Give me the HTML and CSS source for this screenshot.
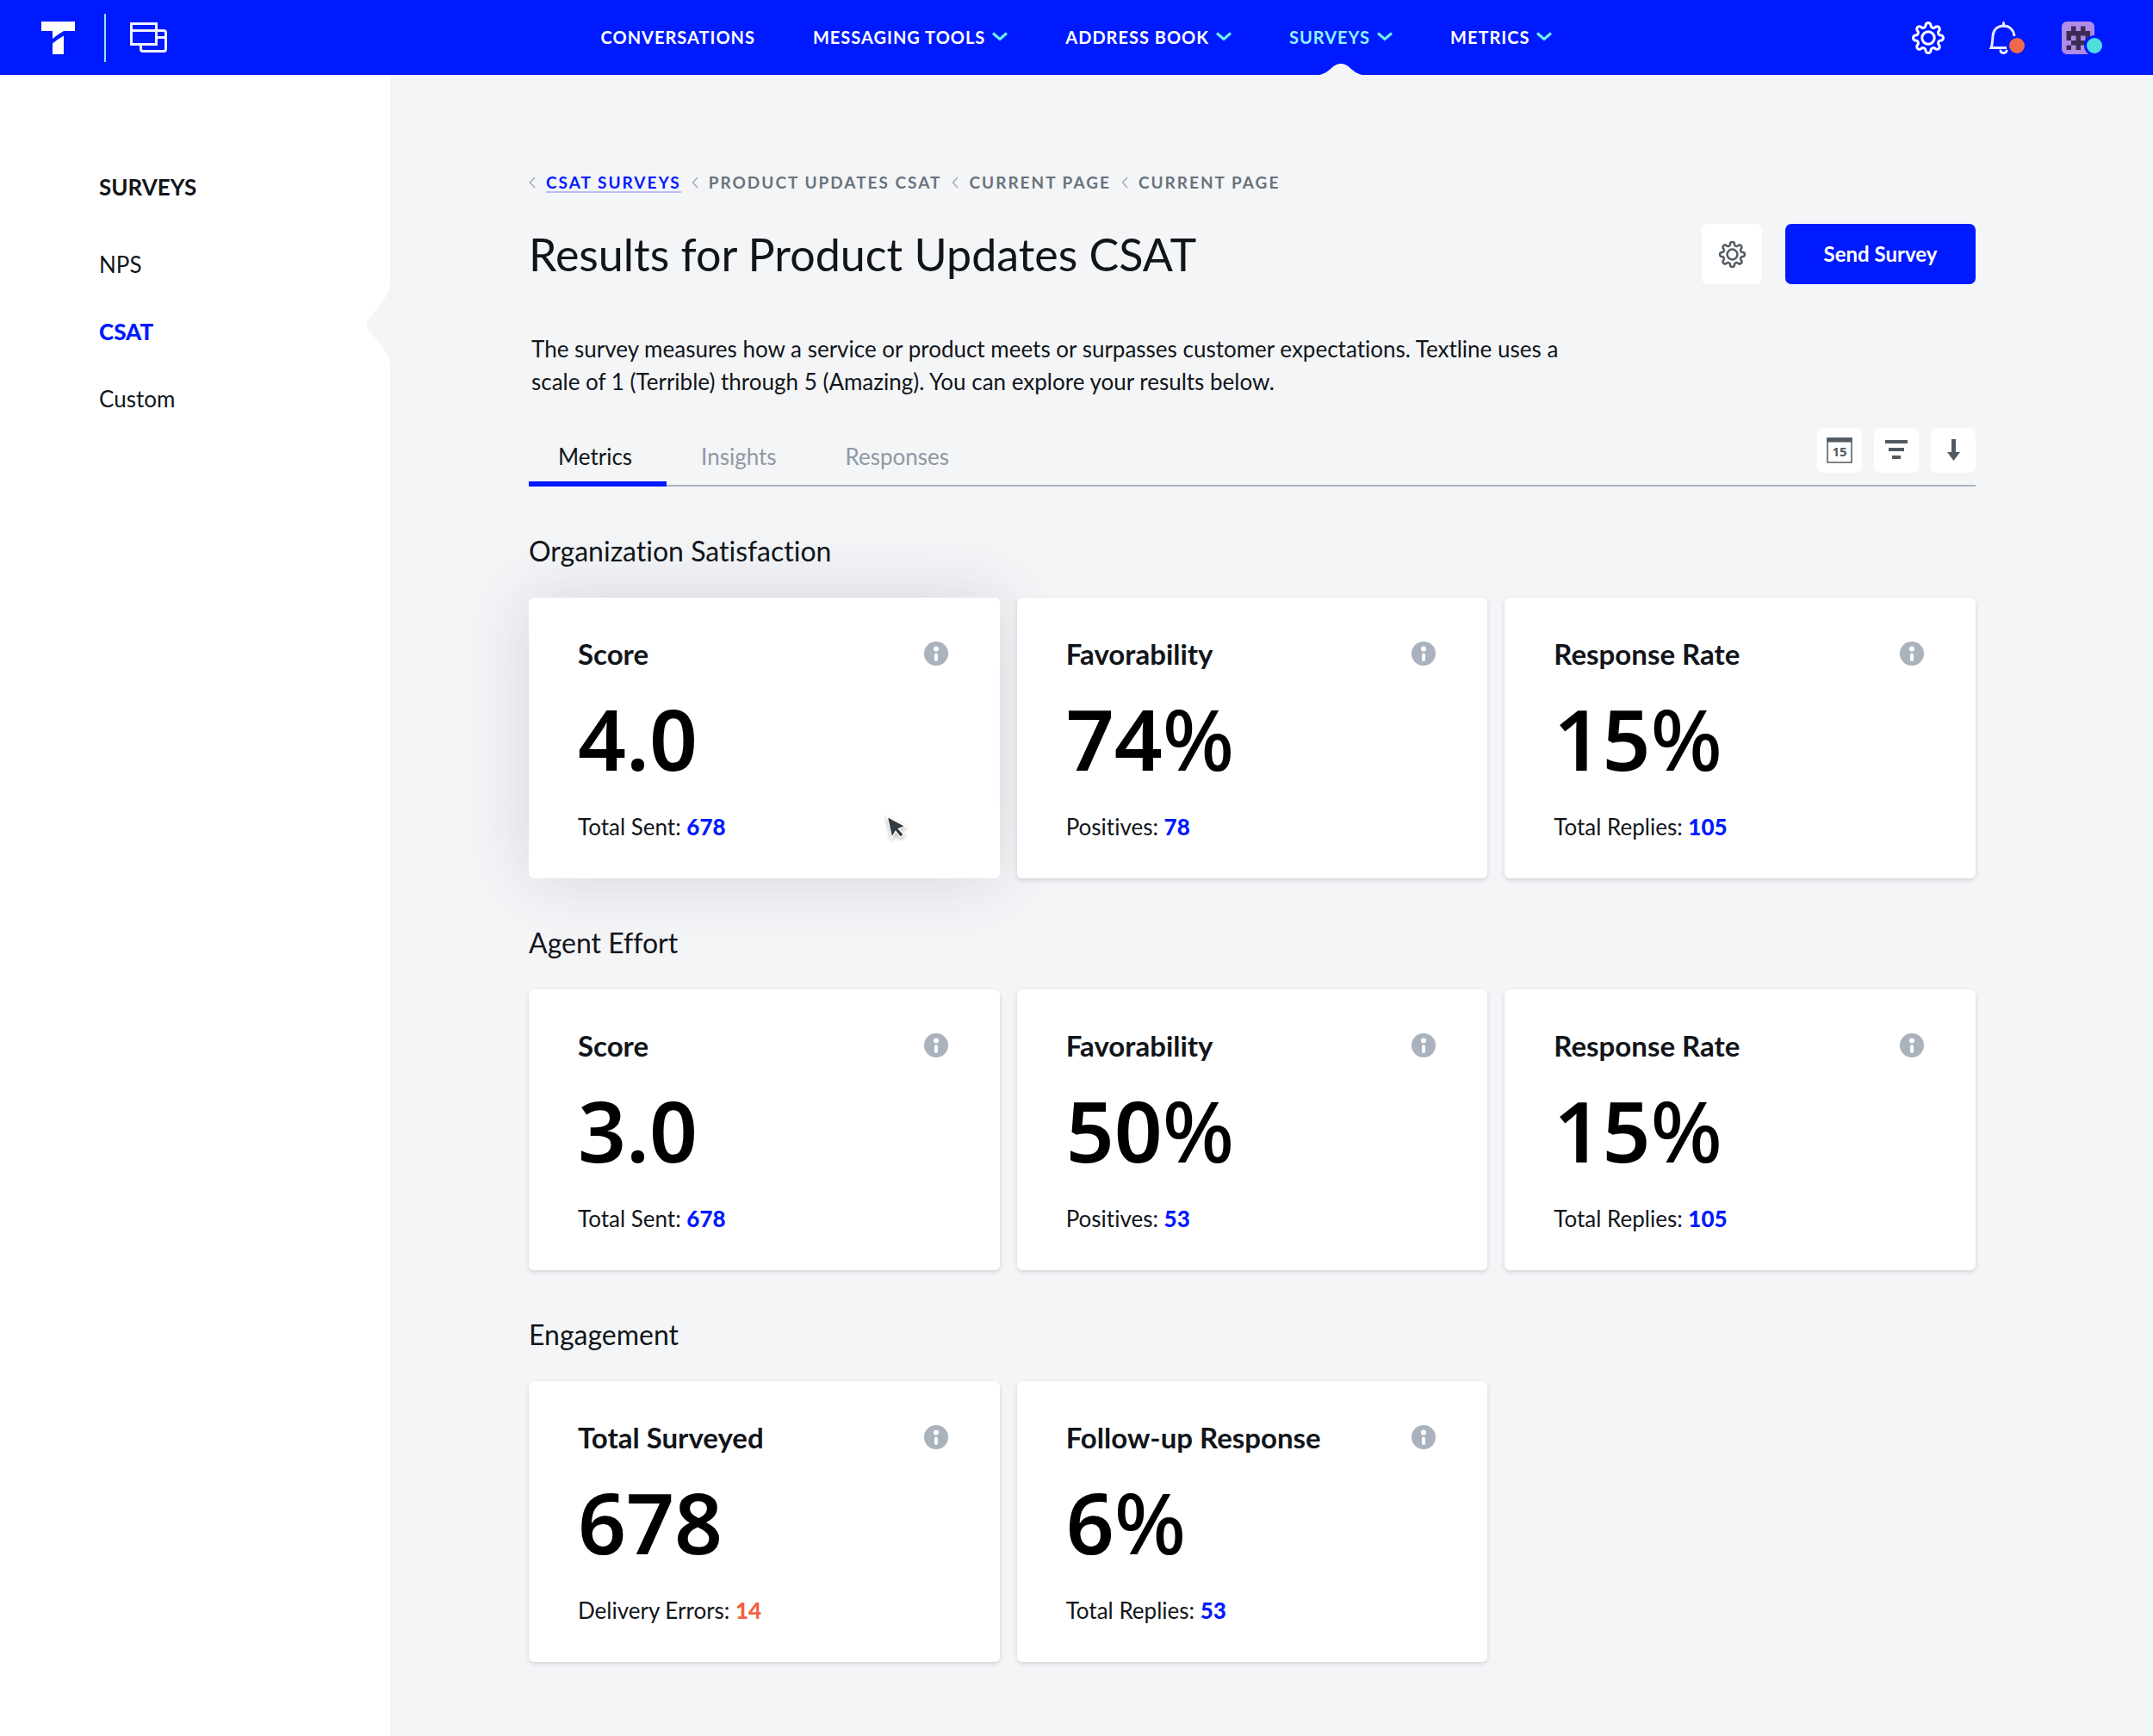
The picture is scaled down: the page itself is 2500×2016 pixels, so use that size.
FILE: index.html
```html
<!DOCTYPE html>
<html lang="en">
<head>
<meta charset="utf-8">
<meta name="viewport" content="width=device-width, initial-scale=1">
<title>Results for Product Updates CSAT</title>
<link rel="stylesheet" href="styles.css">
</head>
<body>
<svg class="sprite" aria-hidden="true">
  <symbol id="gear" viewBox="-20 -20 40 40">
    <path fill="none" stroke="currentColor" stroke-width="3" d="M-3-14.5A3 3 0 0 1 3-14.5A3 3 0 0 0 8.1-12.4A3 3 0 0 1 12.4-8.1A3 3 0 0 0 14.5-3A3 3 0 0 1 14.5 3A3 3 0 0 0 12.4 8.1A3 3 0 0 1 8.1 12.4A3 3 0 0 0 3 14.5A3 3 0 0 1-3 14.5A3 3 0 0 0-8.1 12.4A3 3 0 0 1-12.4 8.1A3 3 0 0 0-14.5 3A3 3 0 0 1-14.5-3A3 3 0 0 0-12.4-8.1A3 3 0 0 1-8.1-12.4A3 3 0 0 0-3-14.5Z"/>
    <circle r="7.2" fill="none" stroke="currentColor" stroke-width="3"/>
  </symbol>
  <symbol id="chevron" viewBox="0 0 18 11">
    <path fill="none" stroke="currentColor" stroke-width="3" d="M1 1.5L9 8.5L17 1.5"/>
  </symbol>
  <symbol id="back" viewBox="0 0 8 14">
    <path fill="none" stroke="currentColor" stroke-width="1.5" d="M7 1L1.5 7L7 13"/>
  </symbol>
  <symbol id="info" viewBox="0 0 28 28">
    <circle cx="14" cy="14" r="14" fill="#aab2bd"/>
    <circle cx="14" cy="8.5" r="3" fill="#fff"/>
    <rect x="12" y="13.5" width="4" height="9.5" rx="2" fill="#fff"/>
  </symbol>
</svg>

<header class="topbar">
  <div class="brand">
    <a href="#" class="icon-link" aria-label="Home">
      <svg width="39" height="38" viewBox="0 0 39 38"><path fill="#fff" d="M0 0H39V11H26Q19 15 13 20V11H0ZM26 16.500V38H13V25.500Q18 21 26 16.500Z"/></svg>
    </a>
    <span class="divider"></span>
    <a href="#" class="icon-link" aria-label="Windows">
      <svg width="43" height="36" viewBox="0 0 43 36" fill="none" stroke="#eef1ff" stroke-width="3"><path d="M1.500 1.500H30.500V25.500H1.500ZM1.500 9.500H39Q41.500 9.500 41.500 12V31Q41.500 33.500 39 33.500H15Q12.500 33.500 12.500 31V25.500M30.500 17.500H41.500"/></svg>
    </a>
  </div>
  <nav class="mainnav" aria-label="Main">
    <a href="#" class="nav-item">CONVERSATIONS</a>
    <button type="button" class="nav-item">MESSAGING TOOLS<svg class="chev"><use href="#chevron"/></svg></button>
    <button type="button" class="nav-item">ADDRESS BOOK<svg class="chev"><use href="#chevron"/></svg></button>
    <button type="button" class="nav-item active">SURVEYS<svg class="chev"><use href="#chevron"/></svg>
      <svg class="nav-notch" viewBox="0 0 50 13"><path fill="#f4f5f7" d="M0 13C12 11 15 0 25 0S38 11 50 13Z"/></svg></button>
    <button type="button" class="nav-item">METRICS<svg class="chev"><use href="#chevron"/></svg></button>
  </nav>
  <div class="tools">
    <button type="button" class="tool" aria-label="Settings"><svg class="gear-lg"><use href="#gear"/></svg></button>
    <button type="button" class="tool" aria-label="Notifications">
      <svg width="48" height="40" viewBox="-3 3 48 40"><g fill="none" stroke="#e6eaff" stroke-width="3" stroke-linecap="round"><path d="M20.500 5.500V9"/><path stroke-linecap="butt" d="M33 21C32 13 27 9 20.500 9C13 9 8.500 14 8 21C7.500 28 7.500 31 6 34.500H24"/><path d="M17 38Q17.500 40.500 20.500 40.500T24 38"/></g><circle cx="36" cy="32" r="9" fill="#ee6a4c"/></svg>
    </button>
    <button type="button" class="tool" aria-label="Account">
      <svg width="48" height="40" viewBox="0 0 48 40"><rect y="1" width="38" height="38" rx="6" fill="#b18be8"/>
        <g fill="#3b2c55" transform="translate(5.500 6.500) scale(5.500)"><path d="M1 0H2V1H3V0H4V1H5V4H4V5H4V4H3V5H2V4H1V3H0V1H1ZM1 2V3H2V2ZM3 2V3H4V2ZM0 4H1V5H0Z" fill-rule="evenodd"/></g>
        <circle cx="38" cy="29" r="12" fill="#001aff"/><circle cx="38" cy="29" r="9" fill="#4fdfdf"/></svg>
    </button>
  </div>
</header>

<div class="layout">
  <aside class="sidebar">
    <h2 class="side-title">SURVEYS</h2>
    <ul class="side-list">
      <li><a href="#">NPS</a></li>
      <li class="current"><a href="#" aria-current="page">CSAT</a>
        <svg class="side-notch" viewBox="0 0 27 90"><path fill="#f4f5f7" d="M27 0C27 8 14 25 4 36Q0 40 0 45T4 54C14 65 27 82 27 90Z"/></svg></li>
      <li><a href="#">Custom</a></li>
    </ul>
  </aside>

  <main class="main">
    <nav class="crumbs" aria-label="Breadcrumb">
      <svg class="back"><use href="#back"/></svg><a href="#">CSAT SURVEYS</a>
      <svg class="back"><use href="#back"/></svg><span>PRODUCT UPDATES CSAT</span>
      <svg class="back"><use href="#back"/></svg><span>CURRENT PAGE</span>
      <svg class="back"><use href="#back"/></svg><span>CURRENT PAGE</span>
    </nav>

    <div class="title-row">
      <h1>Results for Product Updates CSAT</h1>
      <button type="button" class="gear-btn" aria-label="Survey settings"><svg class="gear-sm"><use href="#gear"/></svg></button>
      <button type="button" class="send-btn">Send Survey</button>
    </div>

    <p class="intro">The survey measures how a service or product meets or surpasses customer expectations. Textline uses a scale of 1 (Terrible) through 5 (Amazing). You can explore your results below.</p>

    <div class="tabs-row">
      <div class="tabs" role="tablist">
        <button type="button" role="tab" class="tab selected" aria-selected="true">Metrics</button>
        <button type="button" role="tab" class="tab" aria-selected="false">Insights</button>
        <button type="button" role="tab" class="tab" aria-selected="false">Responses</button>
      </div>
      <div class="actions">
        <button type="button" class="action" aria-label="Date range"><svg width="30" height="30" viewBox="0 0 30 30"><rect x="1" y="1" width="28" height="28" fill="none" stroke="#525a61" stroke-width="1.500"/><rect x="0.500" y="0.500" width="29" height="5" fill="#525a61"/><text class="cal-day" x="15" y="22" text-anchor="middle">15</text></svg></button>
        <button type="button" class="action" aria-label="Filter"><svg width="26" height="24" viewBox="0 0 26 24" fill="#525a61"><rect width="26" height="4" y="0"/><rect x="4" y="9" width="18" height="4"/><rect x="8" y="18" width="10" height="4"/></svg></button>
        <button type="button" class="action" aria-label="Download"><svg width="15" height="26" viewBox="0 0 15 26" fill="#525a61"><path d="M5 0H10V15H15L7.500 25L0 15H5Z"/></svg></button>
      </div>
    </div>

    <section class="group">
      <h2>Organization Satisfaction</h2>
      <div class="cards">
        <article class="card raised">
          <header><h3>Score</h3><svg class="info"><use href="#info"/></svg></header>
          <p class="value">4.0</p>
          <p class="note">Total Sent: <a href="#">678</a></p>
          <svg class="cursor" viewBox="0 0 26 30"><path fill="#343c42" stroke="#fff" stroke-width="1.500" d="M2 2L23.500 13.500L15.500 16.500L21.500 23L17.500 26.500L12 19.500L7.500 27Z"/></svg>
        </article>
        <article class="card">
          <header><h3>Favorability</h3><svg class="info"><use href="#info"/></svg></header>
          <p class="value">74<span>%</span></p>
          <p class="note">Positives: <a href="#">78</a></p>
        </article>
        <article class="card">
          <header><h3>Response Rate</h3><svg class="info"><use href="#info"/></svg></header>
          <p class="value">15<span>%</span></p>
          <p class="note">Total Replies: <a href="#">105</a></p>
        </article>
      </div>
    </section>

    <section class="group">
      <h2>Agent Effort</h2>
      <div class="cards">
        <article class="card">
          <header><h3>Score</h3><svg class="info"><use href="#info"/></svg></header>
          <p class="value">3.0</p>
          <p class="note">Total Sent: <a href="#">678</a></p>
        </article>
        <article class="card">
          <header><h3>Favorability</h3><svg class="info"><use href="#info"/></svg></header>
          <p class="value">50<span>%</span></p>
          <p class="note">Positives: <a href="#">53</a></p>
        </article>
        <article class="card">
          <header><h3>Response Rate</h3><svg class="info"><use href="#info"/></svg></header>
          <p class="value">15<span>%</span></p>
          <p class="note">Total Replies: <a href="#">105</a></p>
        </article>
      </div>
    </section>

    <section class="group">
      <h2>Engagement</h2>
      <div class="cards">
        <article class="card">
          <header><h3>Total Surveyed</h3><svg class="info"><use href="#info"/></svg></header>
          <p class="value">678</p>
          <p class="note">Delivery Errors: <a href="#" class="error">14</a></p>
        </article>
        <article class="card">
          <header><h3>Follow-up Response</h3><svg class="info"><use href="#info"/></svg></header>
          <p class="value">6<span>%</span></p>
          <p class="note">Total Replies: <a href="#">53</a></p>
        </article>
      </div>
    </section>
  </main>
</div>
</body>
</html>
```
FILE: styles.css
```css
:root {
  --blue: #001aff;
  --ink: #11151a;
  --page: #f4f5f7;
  --slate: #525a61;
}

* { box-sizing: border-box; }

body {
  margin: 0;
  min-height: 100vh;
  display: flex;
  flex-direction: column;
  background: var(--page);
  color: var(--ink);
  font: 400 26px/32px Lato, "Noto Sans", sans-serif;
  font-variant-ligatures: none;
}

h1, h2, h3, p, ul { margin: 0; padding: 0; font-weight: 400; }
ul { list-style: none; }
a { color: inherit; text-decoration: none; }
button { margin: 0; padding: 0; border: 0; background: none; color: inherit; font: inherit; cursor: pointer; }
svg { display: block; flex: none; overflow: visible; }
.sprite { position: absolute; width: 0; height: 0; }

/* Top bar */
.topbar {
  display: grid;
  grid-template-columns: 1fr auto 1fr;
  height: 87px;
  background: var(--blue);
  color: #fff;
}
.brand { display: flex; align-items: center; padding-left: 48px; }
.divider { width: 2px; height: 56px; margin: 0 28px 0 34px; background: #7ff0ea; }
.mainnav { display: flex; gap: 67px; }
.nav-item {
  position: relative;
  display: flex;
  align-items: center;
  gap: 8px;
  padding-bottom: 2px;
  font-size: 20px;
  font-weight: 700;
  letter-spacing: 1px;
  white-space: nowrap;
}
.nav-item.active { color: #8df3ff; }
.chev { width: 18px; height: 11px; color: #6cf0ea; }
.nav-notch { position: absolute; bottom: 0; left: calc(50% - 25px); width: 50px; height: 13px; }
.tools { display: flex; align-items: center; justify-content: flex-end; gap: 43px; padding-right: 58px; }
.gear-lg { width: 42px; height: 40px; }

/* Body layout */
.layout { flex: 1; display: flex; }
.sidebar { flex: none; width: 453px; padding: 114px 0 60px 115px; background: #fff; }
.side-title { margin-bottom: 58px; font-size: 26px; font-weight: 700; }
.side-list { display: grid; gap: 46px; }
.side-list li { position: relative; }
.current { color: var(--blue); font-weight: 900; }
.side-notch { position: absolute; top: -37px; right: 0; width: 27px; height: 90px; }
.main { flex: 1; min-width: 0; padding: 113px 206px 88px 161px; }

/* Breadcrumbs */
.crumbs {
  display: flex;
  align-items: center;
  gap: 12px;
  line-height: 24px;
  font-size: 19px;
  font-weight: 700;
  letter-spacing: 2px;
  color: #68727c;
}
.crumbs a { color: var(--blue); box-shadow: 0 1px #b9c1fb, 0 2px #b9c1fb; line-height: 20px; }
.back { width: 8px; height: 14px; color: #a3abb4; }

/* Title */
.title-row { display: flex; align-items: center; margin-top: 36px; }
h1 { flex: 1; font-size: 52px; line-height: 70px; }
.gear-btn, .send-btn { height: 70px; border-radius: 7px; }
.gear-btn { display: grid; place-items: center; width: 70px; margin-right: 27px; background: #fff; color: var(--slate); }
.gear-sm { width: 33px; height: 33px; }
.send-btn { width: 221px; background: var(--blue); color: #fff; font-size: 24px; font-weight: 700; }
.intro { max-width: 1220px; margin-top: 56px; padding-left: 3px; line-height: 38px; }

/* Tabs */
.tabs-row {
  display: flex;
  justify-content: space-between;
  margin-top: 35px;
  height: 68px;
  box-shadow: inset 0 -2px #a9b2bd;
}
.tabs { display: flex; }
.tab { padding: 0 40px 2px; color: #8f98a3; }
.tab.selected { padding-left: 34px; color: var(--ink); box-shadow: inset 0 -6px var(--blue); }
.actions { display: flex; gap: 14px; }
.action { display: grid; place-items: center; width: 52px; height: 52px; border-radius: 7px; background: #fff; }
.cal-day { font: 700 15px "Noto Sans", sans-serif; fill: var(--slate); }

/* Metric groups */
.group { margin-top: 55px; }
.group h2 { margin-bottom: 34px; font-size: 32px; line-height: 40px; }
.cards { display: grid; grid-template-columns: repeat(3, 1fr); gap: 20px; }
.card {
  position: relative;
  padding: 45px 57px;
  border-radius: 6px;
  background: #fff;
  box-shadow: 0 2px 5px rgba(30, 40, 60, .16);
}
.raised { box-shadow: 0 0 80px rgba(50, 60, 90, .17); }
.card header { display: flex; align-items: center; justify-content: space-between; }
.card h3 { font-size: 33px; font-weight: 700; line-height: 40px; }
.info { width: 28px; height: 28px; margin-right: 3px; }
.value { margin: 28px 0 38px; font: 600 98px/100px "Noto Sans", sans-serif; color: #000; }
.value span { font-weight: 500; }
.note { line-height: 30px; }
.note a { color: var(--blue); font-weight: 900; }
.note .error { color: #f0623f; }
.cursor { position: absolute; left: 414px; top: 252px; width: 26px; height: 30px; filter: drop-shadow(0 2px 2px rgba(0, 0, 0, .3)); }
```
